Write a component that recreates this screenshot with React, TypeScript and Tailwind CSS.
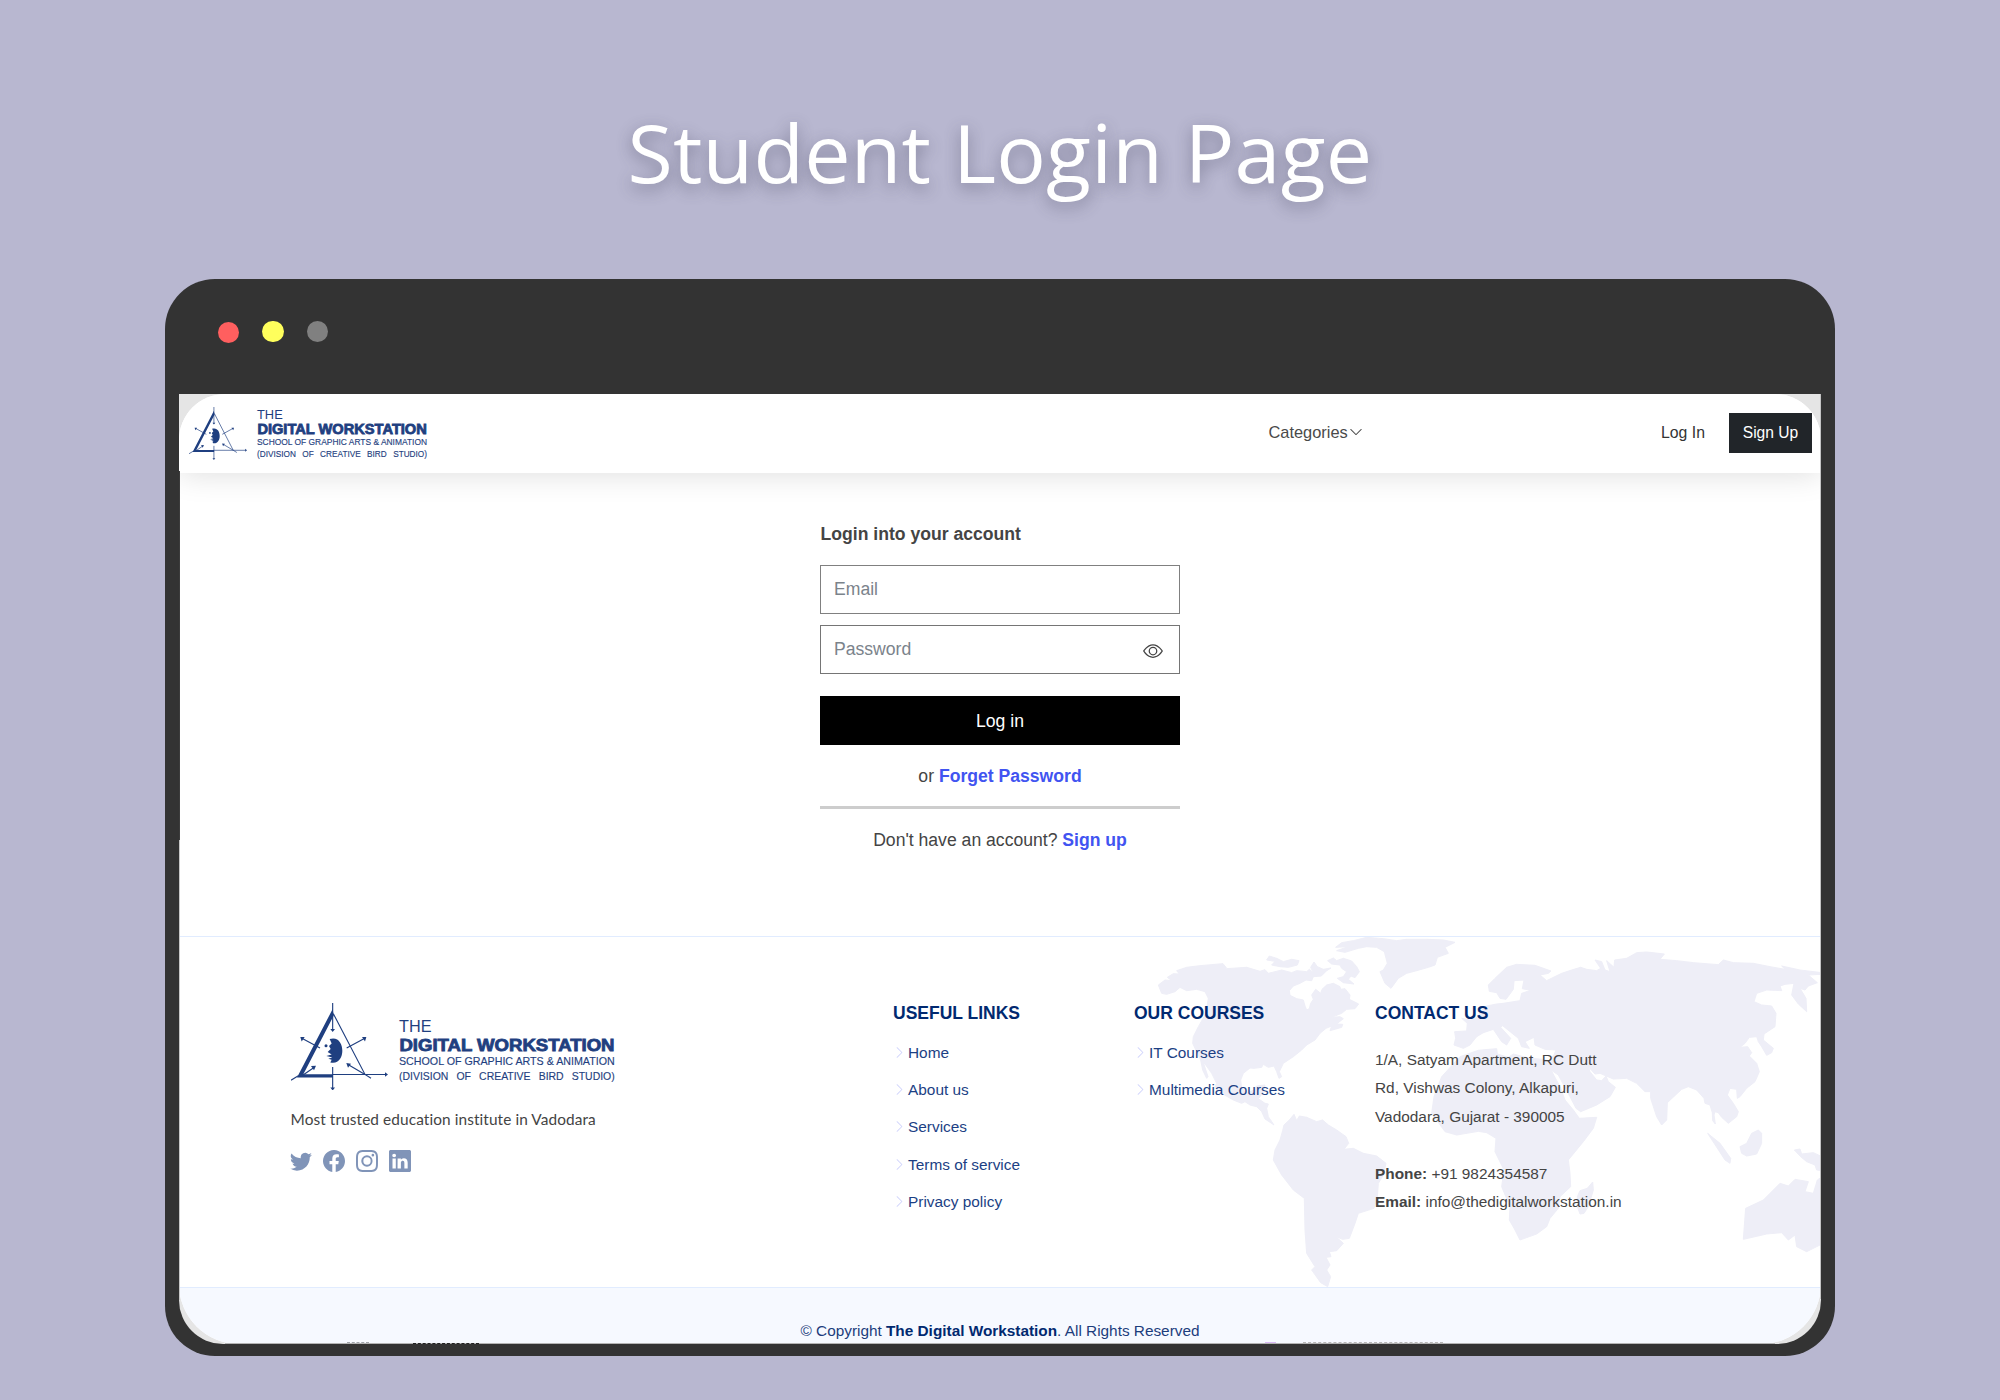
import React from "react";
import {
  BsChevronDown,
  BsChevronRight,
  BsEye,
  BsFacebook,
  BsInstagram,
  BsLinkedin,
  BsTwitter,
} from "react-icons/bs";

function LogoMark({ className }: { className: string }) {
  return (
    <svg viewBox="62 68 291 262" preserveAspectRatio="none" className={className} fill="#1f3f80" stroke="none">
      <polygon points="187,86 190,106 99,281 188,281 188,291 80,291" />
      <g fill="none" stroke="#1f3f80" strokeWidth="3.4">
        <path d="M187 68V150M189 100L284 282L302 293M188 282H346M187 260V324M62 299L84 286" />
        <path d="M149 203L96 174M229 203L282 174M96 285L131 261M284 282L233 252" />
      </g>
      <polygon points="180,146 194,146 187,155" />
      <polygon points="180,321 194,321 187,330" />
      <polygon points="344,275 344,289 353,282" />
      <polygon points="90,170 103,170 94,183" />
      <polygon points="288,170 275,170 284,183" />
      <polygon points="137,256 122,257 131,269" />
      <polygon points="228,248 242,250 233,262" />
      <path d="M178 176C204 168 216 190 216 211C216 232 204 252 180 246L184 238L174 235L186 231L168 227L184 222L172 215L181 206L176 197L184 189Z" />
      <circle cx="167" cy="196" r="4.5" />
    </svg>
  );
}

type Row = { y: number; size: number };

function Wordmark({
  className,
  viewBox,
  width,
  theWidth,
  rows,
}: {
  className: string;
  viewBox: string;
  width: number;
  theWidth: number;
  rows: Row[];
}) {
  return (
    <svg viewBox={viewBox} className={className} fill="#1f3f80" fontFamily='"Liberation Sans", Arial, sans-serif'>
      <text x="0" y={rows[0].y} fontSize={rows[0].size} textLength={theWidth} lengthAdjust="spacingAndGlyphs">
        THE
      </text>
      <text
        x="0.4"
        y={rows[1].y}
        fontSize={rows[1].size}
        fontWeight="700"
        stroke="#1f3f80"
        strokeWidth="0.8"
        textLength={width - 0.6}
        lengthAdjust="spacingAndGlyphs"
      >
        DIGITAL WORKSTATION
      </text>
      <text x="0" y={rows[2].y} fontSize={rows[2].size} stroke="#1f3f80" strokeWidth="0.15" textLength={width} lengthAdjust="spacingAndGlyphs">
        SCHOOL OF GRAPHIC ARTS &amp; ANIMATION
      </text>
      <text
        x="0"
        y={rows[3].y}
        fontSize={rows[3].size}
        stroke="#1f3f80"
        strokeWidth="0.15"
        wordSpacing={rows[3].size * 0.5}
        textLength={width}
        lengthAdjust="spacingAndGlyphs"
      >
        (DIVISION OF CREATIVE BIRD STUDIO)
      </text>
    </svg>
  );
}

function WorldMap() {
  return (
    <svg viewBox="0 21 2013 1050" className="absolute right-0 top-0 h-[350px] w-[671px]" fill="#eeeef7" stroke="#eeeef7" strokeWidth="3" strokeLinejoin="round">
      <path d="M25 165L45 150L65 152L52 142L70 131L88 132L80 122L110 112L150 107L219 101L231 116L290 112L330 124L345 119L355 130L395 120L425 128L440 122L470 125L478 118L490 128L482 112L492 96L502 110L520 118L543 114L530 122L514 138L490 140L485 152L468 150L450 160L430 168L418 182L420 196L440 206L460 210L465 228L470 240L478 236L482 220L490 208L485 195L497 178L512 190L516 178L530 165L550 160L570 170L572 178L585 176L600 195L598 208L626 222L615 236L590 238L575 250L545 262L570 260L580 266L560 282L578 283L575 292L540 302L545 288L528 295L510 310L495 330L470 345L455 360L430 380L400 400L388 425L395 440L387 445L380 425L372 408L355 412L340 403L335 412L312 415L300 414L280 430L272 450L275 475L290 490L312 480L320 468L345 465L338 490L325 506L345 520L355 522L350 535L355 560L372 585L345 567L335 545L320 530L300 525L285 515L275 520L250 510L215 490L195 470L200 460L185 430L165 402L160 398L174 440L170 445L158 420L152 390L140 365L128 340L130 320L145 290L168 250L175 205L165 185L140 178L110 182L90 172L75 185L50 193L35 190Z" />
      <path d="M350 90L358 78L380 85L400 95L425 88L447 92L442 105L415 112L390 110L365 105L375 94Z" />
      <path d="M533 92L550 84L560 92L580 85L605 93L620 110L628 125L615 143L603 138L595 148L612 162L580 158L562 145L580 140L590 125L575 115L570 105L545 102Z" />
      <path d="M557 52L575 38L610 32L650 22L700 26L740 32L770 28L830 28L880 30L915 37L885 52L895 70L862 82L855 105L835 112L800 122L770 130L745 145L723 175L705 160L690 125L700 120L712 100L703 65L680 52L650 50L625 55L585 67L560 62L595 50Z" />
      <path d="M398 602L402 585L418 570L432 553L440 572L448 558L470 562L500 575L518 570L535 585L560 600L588 620L596 640L582 658L610 655L640 670L680 678L708 700L700 735L685 760L682 800L672 835L625 850L615 880L598 925L578 928L558 920L580 940L560 962L538 965L543 980L528 982L540 1005L530 1020L542 1040L533 1070L512 1058L485 1020L495 1010L470 970L465 900L463 805L430 780L395 735L370 690L375 660L390 630Z" />
      <g transform="translate(990 0)">
        <path d="M-78 345L-73 325L-76 305L-40 303L-38 280L-55 265L-30 270L-8 262L5 240L20 228L50 222L70 220L120 212L125 190L152 181L127 176L132 150L102 152L100 178L78 208L60 205L50 188L28 184L25 165L45 145L80 112L110 103L165 106L213 123L205 130L180 135L200 152L245 130L275 120L302 112L320 118L350 122L362 115L345 90L365 95L375 120L390 125L380 92L402 112L404 90L440 85L470 68L500 66L553 72L540 88L590 92L640 98L715 104L730 90L760 98L820 100L870 110L915 118L905 108L960 120L1026 128L1026 133L985 135L1012 158L985 168L975 180L960 175L978 205L980 245L955 222L935 195L942 160L915 163L900 168L905 182L860 180L830 190L822 215L845 225L875 228L888 250L885 290L852 312L850 330L880 355L875 368L860 376L845 350L835 335L830 320L808 322L795 340L780 352L803 350L815 368L808 378L830 400L838 425L825 455L800 475L780 500L772 505L770 478L750 475L742 495L760 520L775 545L770 560L745 580L725 562L715 548L705 545L702 555L706 582L698 572L697 548L690 525L675 520L672 505L650 480L625 470L605 478L562 518L560 570L545 585L530 560L512 505L512 485L495 485L470 460L440 445L400 447L360 430L345 432L325 410L330 425L350 450L365 452L378 438L385 455L406 472L390 500L350 525L302 545L288 535L270 500L235 435L213 420L240 470L255 510L280 540L298 565L350 562L340 595L310 635L265 690L270 730L272 770L240 800L235 835L210 865L200 890L170 912L120 930L105 900L88 870L90 830L65 770L72 720L45 665L48 625L20 608L-5 604L-70 615L-105 605L-145 550L-138 500L-115 440L-60 380L-5 361L50 356L52 372L85 382L100 372L150 385L190 388L205 392L222 375L228 360L195 358L165 345L162 322L135 335L148 355L125 350L115 325L68 287L62 292L92 325L80 345L65 335L40 298L10 308L-10 320L-30 345L-50 355Z" />
        <path d="M292 800L300 782L322 775L338 756L340 780L325 830L312 850L300 852L292 830Z" />
        <path d="M683 610L720 640L752 685L750 700L735 690Z" />
        <path d="M780 650L800 640L815 610L835 600L845 610L845 640L830 672L800 678L785 670Z" />
        <path d="M943 660L960 657L965 672L1000 668L1026 680L1026 722L1010 720L1005 705L980 695L962 680Z" />
        <path d="M790 928L797 835L850 810L870 790L900 760L925 768L945 748L985 755L975 785L1000 790L1012 750L1026 740L1026 942L980 965L950 950L945 915L925 930L905 908L860 912Z" />
      </g>
    </svg>
  );
}

function LinkColumn({ title, links }: { title: string; links: string[] }) {
  return (
    <div className="w-[241px] shrink-0">
      <h4 className="text-[17.5px] font-bold leading-6 text-[#012970]">{title}</h4>
      <ul className="mt-[9px]">
        {links.map((l) => (
          <li key={l} className="flex h-[37.2px] items-center text-[15.4px] text-[#1c3f84]">
            <BsChevronRight className="mr-[2px] size-[13px] text-[#d0d4fc]" />
            {l}
          </li>
        ))}
      </ul>
    </div>
  );
}

export default function App() {
  return (
    <div className="flex h-[1400px] w-[2000px] flex-col items-center overflow-hidden bg-[#b8b7d0] font-['Liberation_Sans',Arial,sans-serif] text-[#444444]">
      <h1 className="mt-[92px] h-[120px] scale-x-[1.035] whitespace-nowrap font-['Open_Sans',sans-serif] text-[79.8px] font-normal leading-[120px] tracking-[0.2px] text-white [text-shadow:0_5px_16px_rgba(60,60,85,0.48)]">
        Student Login Page
      </h1>

      <div className="mt-[67px] h-[1077px] w-[1670px] shrink-0 rounded-[50px] bg-[#333333] px-[14px]">
        <div className="flex h-[115px] gap-[23px] pl-[38.5px] pt-[41.5px]">
          <span className="mt-[1px] size-[21.5px] rounded-full bg-[#ff5f5f]" />
          <span className="size-[21.5px] rounded-full bg-[#ffff5c]" />
          <span className="size-[21.5px] rounded-full bg-[#808080]" />
        </div>

        <div className="relative h-[949.5px] w-[1642px] overflow-hidden rounded-b-[44px] bg-[#e5e5e5]">
          <div className="h-full overflow-hidden rounded-b-[60px] rounded-t-[46px] bg-white">
            <header className="relative flex h-[78.5px] items-start bg-white shadow-[0_2px_30px_rgba(0,0,0,0.13)]">
              <LogoMark className="ml-[9.7px] mt-[13px] h-[53px] w-[58px]" />
              <Wordmark
                className="ml-[10.3px] mt-[10px] h-[60px] w-[176px] overflow-visible"
                viewBox="0 0 176 60"
                width={170}
                theWidth={25.7}
                rows={[
                  { y: 14.7, size: 13 },
                  { y: 30.3, size: 14 },
                  { y: 40.7, size: 9.8 },
                  { y: 53, size: 9.4 },
                ]}
              />
              <nav className="ml-auto flex h-[78px] items-center">
                <a className="-mt-[2px] flex w-[392.5px] items-center gap-[1px] text-[16.4px] text-[#4a4a4a]">
                  Categories
                  <BsChevronDown className="size-[14px]" />
                </a>
                <a className="w-[67.5px] text-[15.8px] text-[#333]">Log In</a>
                <a className="mr-[9.5px] flex h-10 w-[83px] items-center justify-center bg-[#212529] pl-px text-[15.6px] text-white">
                  Sign Up
                </a>
              </nav>
            </header>

            <main className="flex h-[463.5px] justify-center pt-[49.5px] text-[17.6px] leading-6">
              <div className="w-[360px]">
                <h2 className="pl-[0.5px] font-bold text-[#444]">Login into your account</h2>
                <div className="mt-[19px] flex h-[49px] items-center border border-[#808080] px-[13px] text-[#7b838b]">
                  <span className="-mt-[2px]">Email</span>
                </div>
                <div className="mt-[11px] flex h-[49px] items-center justify-between border border-[#757575] px-[13px] pr-[16.5px] text-[#7b838b]">
                  <span className="-mt-[2px]">Password</span>
                  <BsEye className="mt-[3px] size-5 text-[#444]" />
                </div>
                <div className="mt-[22px] flex h-[49px] items-center justify-center bg-black text-white">Log in</div>
                <p className="mt-[19px] text-center">
                  or <b className="text-[#4154f1]">Forget Password</b>
                </p>
                <div className="mt-[18px] h-[3px] bg-[#cdcdcd]" />
                <p className="mt-[19px] text-center">
                  Don't have an account? <b className="text-[#4154f1]">Sign up</b>
                </p>
              </div>
            </main>

            <footer>
              <div className="relative h-[351px] border-t border-[#e1ecff]">
                <WorldMap />
                <div className="relative flex pl-[111.5px] pt-16">
                  <div className="w-[602.5px] shrink-0">
                    <div className="flex h-[90px]">
                      <LogoMark className="mt-[1.5px] h-[87.5px] w-[97px]" />
                      <Wordmark
                        className="ml-[11.3px] mt-[9px] h-[80px] w-[222px] overflow-visible"
                        viewBox="0 0 222 80"
                        width={215.7}
                        theWidth={32.5}
                        rows={[
                          { y: 22.3, size: 16.8 },
                          { y: 41.3, size: 15.8 },
                          { y: 54.7, size: 11.3 },
                          { y: 70, size: 11.2 },
                        ]}
                      />
                    </div>
                    <p className="mt-[15px] font-['Lato',sans-serif] text-[15.4px] leading-[26px] tracking-[0.09px]">
                      Most trusted education institute in Vadodara
                    </p>
                    <div className="mt-[18px] flex gap-[11px] text-[#8094b8]">
                      <BsTwitter className="-ml-[0.5px] size-[22px]" />
                      <BsFacebook className="size-[22px]" />
                      <BsInstagram className="size-[22px]" />
                      <BsLinkedin className="size-[22px]" />
                    </div>
                  </div>
                  <LinkColumn
                    title="USEFUL LINKS"
                    links={["Home", "About us", "Services", "Terms of service", "Privacy policy"]}
                  />
                  <LinkColumn title="OUR COURSES" links={["IT Courses", "Multimedia Courses"]} />
                  <div>
                    <h4 className="text-[17.5px] font-bold leading-6 text-[#012970]">CONTACT US</h4>
                    <p className="mt-[20.5px] whitespace-nowrap text-[15.4px] leading-[28.5px]">
                      1/A, Satyam Apartment, RC Dutt
                      <br />
                      Rd, Vishwas Colony, Alkapuri,
                      <br />
                      Vadodara, Gujarat - 390005
                      <br />
                      <br />
                      <b>Phone:</b> +91 9824354587
                      <br />
                      <b>Email:</b> info@thedigitalworkstation.in
                    </p>
                  </div>
                </div>
              </div>
              <div className="h-[60px] border-t border-[#e1ecff] bg-[#f6f9ff] pt-[31px] text-center text-[15.35px] leading-6 text-[#1c3d7c]">
                © Copyright <b className="text-[#012970]">The Digital Workstation</b>. All Rights Reserved
              </div>
            </footer>
          </div>

          {/* window edges and the sliver of content showing under the page */}
          <div className="absolute left-0 top-[77px] h-[369px] w-px bg-[#3c3c3c]" />
          <div className="absolute left-0 top-[446px] h-[460px] w-px bg-[#c8c8c8]" />
          <div className="absolute right-0 top-0 h-[905px] w-px bg-[#c4c4c4]" />
          <div className="absolute bottom-0 left-[46px] right-[46px] h-px bg-[#b4b4b4]" />
          <div className="absolute bottom-px left-[168px] w-[22px] border-t border-dashed border-[#a0a4aa]" />
          <div className="absolute bottom-0 left-[234px] w-[66px] border-t border-dashed border-[#222]" />
          <div className="absolute bottom-px left-[1086px] h-px w-[11px] bg-[#d9b8f5]" />
          <div className="absolute bottom-px left-[1124px] w-[140px] border-t border-dashed border-[#b8b8b8]" />
        </div>
      </div>
    </div>
  );
}
